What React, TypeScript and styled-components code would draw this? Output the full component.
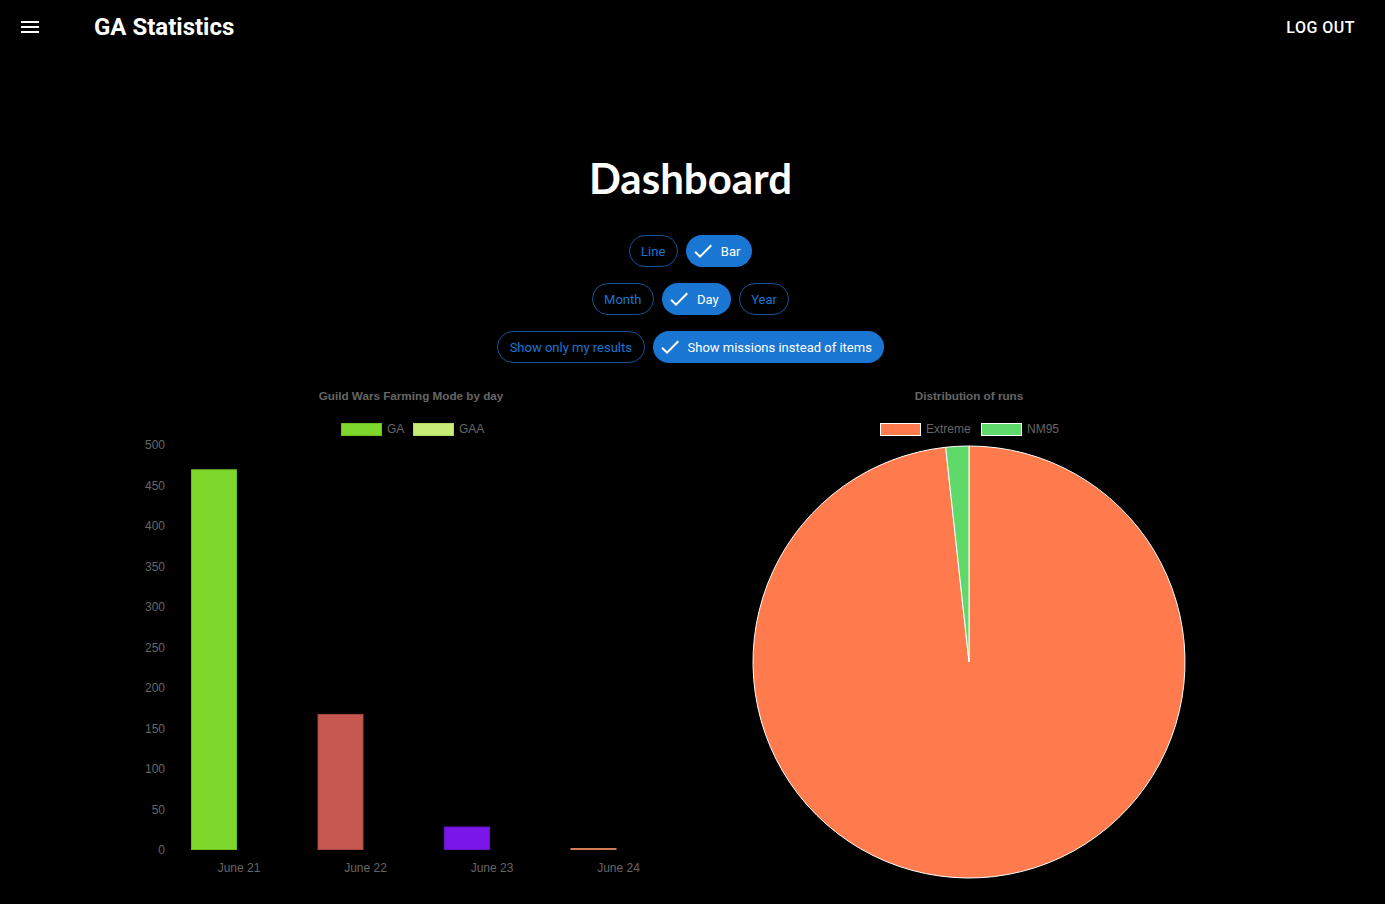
import React from "react";
import styled, { createGlobalStyle } from "styled-components";

const GlobalStyle = createGlobalStyle`
    html, body {
        margin: 0;
        padding: 0;
        background: #000;
        color: #fff;
        font-family: Roboto, "Liberation Sans", Arial, sans-serif;
    }
`;

const Page = styled.div`
    min-height: 904px;
    background: #000;
`;

const AppBar = styled.header`
    height: 56px;
    display: flex;
    align-items: center;
    padding: 0 30px 0 18px;
`;

const MenuButton = styled.button`
    width: 24px;
    height: 24px;
    padding: 0;
    border: none;
    background: none;
    color: #fff;
    display: flex;
    margin-top: -2px;
`;

const AppTitle = styled.h1`
    margin: -2px 0 0 52px;
    font-size: 24px;
    font-weight: 700;
    flex: 1;
`;

const LogOut = styled.button`
    border: none;
    background: none;
    color: #fff;
    font-family: Roboto, sans-serif;
    font-size: 16px;
    font-weight: 500;
    letter-spacing: 0.03em;
    padding: 0;
    margin-top: -2px;
`;

const Main = styled.main`
    display: flex;
    flex-direction: column;
    align-items: center;
    padding-right: 4px;
`;

const Heading = styled.h2`
    margin: 98px 0 33px;
    font-family: Lato, "Open Sans", sans-serif;
    font-size: 42px;
    font-weight: 700;
    line-height: 48px;
`;

const ChipRows = styled.div`
    display: flex;
    flex-direction: column;
    align-items: center;
    gap: 16px;
`;

const ChipRow = styled.div`
    display: flex;
    gap: 8px;
`;

const Chip = styled.div<{ $selected?: boolean }>`
    height: 32px;
    box-sizing: border-box;
    border-radius: 16px;
    display: flex;
    align-items: center;
    font-size: 13px;
    padding: ${(p) => (p.$selected ? "0 12px 0 5px" : "0 11.5px")};
    background: ${(p) => (p.$selected ? "#1976d2" : "transparent")};
    color: ${(p) => (p.$selected ? "#fff" : "#1976d2")};
    border: ${(p) => (p.$selected ? "none" : "1px solid rgba(25, 118, 210, 0.7)")};

    svg {
        margin-right: 6px;
    }
`;

const ChartsRow = styled.div`
    width: 1116px;
    display: flex;
    margin: 17px 2px 0 0;
`;

const ChartBox = styled.div`
    width: 558px;
    height: 510px;
`;

const Check = () => (
    <svg width="24" height="24" viewBox="0 0 24 24" fill="#fff">
        <path d="M9 16.17 4.83 12l-1.42 1.41L9 19 21 7l-1.41-1.41z" />
    </svg>
);

const bars = [
    { label: "June 21", value: 470, color: "#7ed82b", border: "#6cbf22" },
    { label: "June 22", value: 168, color: "#c5594f", border: "#a8473f" },
    { label: "June 23", value: 29, color: "#7a17e8", border: "#6412c4" },
    { label: "June 24", value: 2, color: "#e8936a", border: "#d07d56" },
];

const ticks = [0, 50, 100, 150, 200, 250, 300, 350, 400, 450, 500];
const zeroY = 470;
const scale = 0.81;
const font = "'Liberation Sans', Arial, sans-serif";

function BarChart() {
    return (
        <svg width="558" height="510" fontFamily={font}>
            <text x="279" y="20" textAnchor="middle" fontSize="11.7" fontWeight="700" fill="#666">
                Guild Wars Farming Mode by day
            </text>
            <rect x="209.5" y="43.5" width="40" height="12" fill="#7ed82b" stroke="#6cbf22" />
            <text x="255" y="53" fontSize="12" fill="#666">GA</text>
            <rect x="281.5" y="43.5" width="40" height="12" fill="#c8ec78" stroke="#b3d866" />
            <text x="327" y="53" fontSize="12" fill="#666">GAA</text>
            {ticks.map((t) => (
                <text key={t} x="33" y={zeroY - t * scale + 4} textAnchor="end" fontSize="12" fill="#666">
                    {t}
                </text>
            ))}
            {bars.map((b, i) => {
                const h = Math.max(b.value * scale, 2);
                const x = 59 + i * 126.5;
                return (
                    <g key={b.label}>
                        <rect x={x + 0.5} y={zeroY - h + 0.5} width="45" height={h - 1} fill={b.color} stroke={b.border} />
                        <text x={x + 48} y="492" textAnchor="middle" fontSize="12" fill="#666">
                            {b.label}
                        </text>
                    </g>
                );
            })}
        </svg>
    );
}

function PieChart() {
    const cx = 279;
    const cy = 282;
    const r = 216;
    const a = ((-90 - 6.2) * Math.PI) / 180;
    const px = cx + r * Math.cos(a);
    const py = cy + r * Math.sin(a);
    return (
        <svg width="558" height="510" fontFamily={font}>
            <text x="279" y="20" textAnchor="middle" fontSize="11.7" fontWeight="700" fill="#666">
                Distribution of runs
            </text>
            <rect x="190.5" y="43.5" width="40" height="12" fill="#ff7b4d" stroke="#fff" />
            <text x="236" y="53" fontSize="12" fill="#666">Extreme</text>
            <rect x="291.5" y="43.5" width="40" height="12" fill="#5ed96a" stroke="#fff" />
            <text x="337" y="53" fontSize="12" fill="#666">NM95</text>
            <path
                d={`M${cx},${cy} L${cx},${cy - r} A${r},${r} 0 1 1 ${px},${py} Z`}
                fill="#ff7b4d"
                stroke="#fff"
                strokeWidth="1"
            />
            <path
                d={`M${cx},${cy} L${px},${py} A${r},${r} 0 0 1 ${cx},${cy - r} Z`}
                fill="#5ed96a"
                stroke="#fff"
                strokeWidth="1"
            />
        </svg>
    );
}

export default function App() {
    return (
        <Page>
            <GlobalStyle />
            <AppBar>
                <MenuButton aria-label="menu">
                    <svg width="24" height="24" viewBox="0 0 24 24" fill="#fff">
                        <path d="M3 18h18v-2H3v2zm0-5h18v-2H3v2zm0-7v2h18V6H3z" />
                    </svg>
                </MenuButton>
                <AppTitle>GA Statistics</AppTitle>
                <LogOut>LOG OUT</LogOut>
            </AppBar>
            <Main>
                <Heading>Dashboard</Heading>
                <ChipRows>
                    <ChipRow>
                        <Chip>Line</Chip>
                        <Chip $selected>
                            <Check />
                            Bar
                        </Chip>
                    </ChipRow>
                    <ChipRow>
                        <Chip>Month</Chip>
                        <Chip $selected>
                            <Check />
                            Day
                        </Chip>
                        <Chip>Year</Chip>
                    </ChipRow>
                    <ChipRow>
                        <Chip>Show only my results</Chip>
                        <Chip $selected>
                            <Check />
                            Show missions instead of items
                        </Chip>
                    </ChipRow>
                </ChipRows>
                <ChartsRow>
                    <ChartBox>
                        <BarChart />
                    </ChartBox>
                    <ChartBox>
                        <PieChart />
                    </ChartBox>
                </ChartsRow>
            </Main>
        </Page>
    );
}
